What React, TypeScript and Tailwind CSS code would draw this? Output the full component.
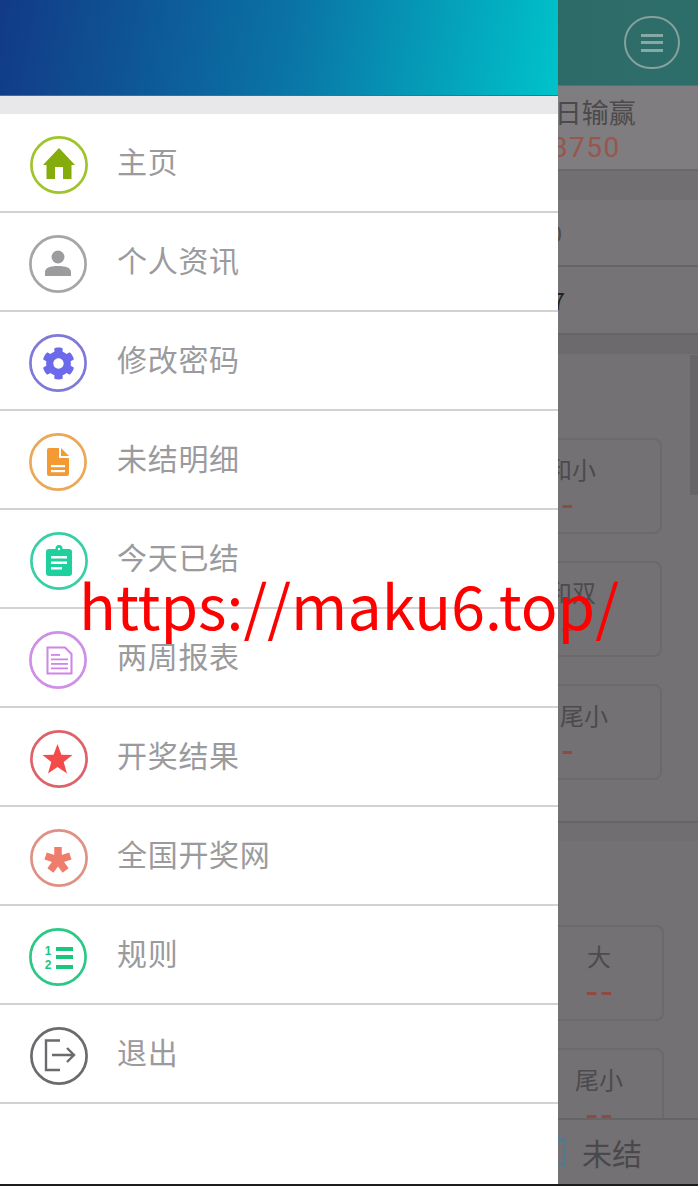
import React from "react";
import { FaCog } from "react-icons/fa";

const cjk = "font-['Noto_Sans_CJK_SC','Noto_Sans',sans-serif]";

function Ring({ color, children }: { color: string; children: React.ReactNode }) {
  return (
    <svg width="58" height="58" viewBox="0 0 58 58" className="shrink-0 block">
      <circle cx="29" cy="29" r="27.6" fill="none" stroke={color} strokeWidth="2.7" />
      {children}
    </svg>
  );
}

const HomeIcon = () => (
  <Ring color="#a0c42c">
    <path d="M29 12 L45 29 H41.5 V43 H33 V31 H25 V43 H16.5 V29 H13 Z" fill="#84ad0c" />
  </Ring>
);
const UserIcon = () => (
  <Ring color="#a6a5a8">
    <circle cx="29" cy="22" r="6.5" fill="#9c9b9e" />
    <path d="M16 41 V37 C16 33 21 31 29 31 C37 31 42 33 42 37 V41 Z" fill="#9c9b9e" />
  </Ring>
);
const GearIcon = () => (
  <Ring color="#7f79da">
    <foreignObject x="12.5" y="12.5" width="33" height="33">
      <div className="w-[33px] h-[33px] text-[#6c69ea]">
        <FaCog size={33} />
      </div>
    </foreignObject>
  </Ring>
);
const DocIcon = () => (
  <Ring color="#eaa858">
    <path d="M18 17 Q18 15 20 15 H30 V25 H40 V41 Q40 43 38 43 H20 Q18 43 18 41 Z" fill="#f39a34" />
    <path d="M32 15 L40 23 H32 Z" fill="#f39a34" />
    <rect x="22" y="32" width="14" height="2.2" fill="#fff" />
    <rect x="22" y="37" width="14" height="2.2" fill="#fff" />
  </Ring>
);
const ClipIcon = () => (
  <Ring color="#38cfa6">
    <rect x="16" y="17" width="26" height="27" rx="3" fill="#1ed09e" />
    <circle cx="29" cy="16.5" r="3.5" fill="#1ed09e" />
    <circle cx="29" cy="17" r="1.2" fill="#fff" />
    <rect x="21" y="24" width="16" height="2.5" fill="#fff" />
    <rect x="21" y="29.5" width="16" height="2.5" fill="#fff" />
    <rect x="21" y="35" width="11" height="2.5" fill="#fff" />
  </Ring>
);
const ReportIcon = () => (
  <Ring color="#cf8fe6">
    <path d="M18.5 16.5 H36 L42.5 23 V42.5 H18.5 Z" fill="none" stroke="#d283ea" strokeWidth="2" />
    <rect x="22" y="23" width="9" height="1.8" fill="#d283ea" />
    <rect x="22" y="27.5" width="17" height="1.8" fill="#d283ea" />
    <rect x="22" y="32" width="17" height="1.8" fill="#d283ea" />
    <rect x="22" y="36.5" width="17" height="1.8" fill="#d283ea" />
  </Ring>
);
const StarIcon = () => (
  <Ring color="#dc636a">
    <polygon
      points="27.5,14 31.4,24.8 42.5,25 33.7,32 37,43.5 27.5,37 18,43.5 21.3,32 12.5,25 23.6,24.8"
      fill="#f54a4a"
    />
  </Ring>
);
const AsteriskIcon = () => (
  <Ring color="#df9184">
    <g stroke="#ee7d6b" strokeWidth="7.5">
      <path d="M28 31 L28 18" />
      <path d="M28 31 L40.4 27" />
      <path d="M28 31 L35.6 41.5" />
      <path d="M28 31 L20.4 41.5" />
      <path d="M28 31 L15.6 27" />
    </g>
  </Ring>
);
const ListIcon = () => (
  <Ring color="#2cc886">
    <rect x="27" y="19" width="17" height="4" fill="#1bc77d" />
    <rect x="27" y="27" width="17" height="4" fill="#1bc77d" />
    <rect x="27" y="37" width="17" height="4" fill="#1bc77d" />
    <text x="19" y="27" textAnchor="middle" fontSize="12" fontWeight="700" fill="#1bc77d" fontFamily="Liberation Sans, sans-serif">1</text>
    <text x="19" y="41" textAnchor="middle" fontSize="12" fontWeight="700" fill="#1bc77d" fontFamily="Liberation Sans, sans-serif">2</text>
  </Ring>
);
const LogoutIcon = () => (
  <Ring color="#6c6a6e">
    <path d="M30 13.5 H16 V43 H30" fill="none" stroke="#6c6a6e" strokeWidth="2.4" />
    <path d="M22 28 H44 M37 21 L44 28 L37 35" fill="none" stroke="#6c6a6e" strokeWidth="2.4" />
  </Ring>
);

const menu: { label: string; icon: React.ReactNode; nudge?: boolean }[] = [
  { label: "主页", icon: <HomeIcon />, nudge: true },
  { label: "个人资讯", icon: <UserIcon /> },
  { label: "修改密码", icon: <GearIcon /> },
  { label: "未结明细", icon: <DocIcon /> },
  { label: "今天已结", icon: <ClipIcon />, nudge: true },
  { label: "两周报表", icon: <ReportIcon /> },
  { label: "开奖结果", icon: <StarIcon />, nudge: true },
  { label: "全国开奖网", icon: <AsteriskIcon />, nudge: true },
  { label: "规则", icon: <ListIcon /> },
  { label: "退出", icon: <LogoutIcon />, nudge: true },
];

function Card({ label }: { label?: string }) {
  return (
    <div className="h-[96px] rounded-lg border-2 border-[#6b696b] flex flex-col items-center pt-[12px]">
      {label && (
        <>
          <span className="text-[24px] leading-[34px] text-[#4c4a4c]">{label}</span>
          <span className="text-[36px] leading-[24px] mt-[3px] ml-[2px] tracking-[2px] font-medium text-[#8f4a42]">--</span>
        </>
      )}
    </div>
  );
}

export default function App() {
  return (
    <div className={`relative w-[698px] h-[1186px] overflow-hidden bg-[#1d1c1d] ${cjk}`}>
      {/* Page dimmed behind the drawer */}
      <div className="h-[1184px] flex flex-col bg-[#737173]">
        <header className="h-[86px] shrink-0 bg-gradient-to-r from-[#2e5f66] to-[#2d6e6a] flex items-center justify-end pr-[18px] border-b border-[#5d6f6d]">
          <div className="w-[56px] h-[53px] rounded-full border-2 border-[#86a09e] flex flex-col items-center justify-center gap-[4.5px]">
            <span className="w-[22px] h-[3px] bg-[#88a8a4]" />
            <span className="w-[22px] h-[3px] bg-[#88a8a4]" />
            <span className="w-[22px] h-[3px] bg-[#88a8a4]" />
          </div>
        </header>

        <section className="h-[85px] shrink-0 bg-[#7f7d7f] border-b-2 border-[#6a686a] grid grid-cols-3">
          <div />
          <div />
          <div className="flex flex-col items-center pt-[7px]">
            <span className="text-[27px] leading-[38px] text-[#4c4a4c]">今日输赢</span>
            <span className="text-[28px] leading-[34px] text-[#98564c] font-['Roboto',sans-serif] tracking-[1.5px]">-8750</span>
          </div>
        </section>

        <div className="h-[29px] shrink-0 bg-[#716f71]" />
        <div className="h-[67px] shrink-0 bg-[#777577] border-b-2 border-[#666466] flex items-center justify-end pr-[136px] text-[22px] text-[#4c4a4c]">
          0
        </div>
        <div className="h-[68px] shrink-0 bg-[#757375] border-b-2 border-[#666466] flex items-center justify-end pr-[133px] text-[24px] text-[#222]">
          7
        </div>
        <div className="h-[19px] shrink-0 bg-[#6c6a6c]" />

        <section className="h-[469px] shrink-0 border-b-2 border-[#666466] pt-[84px] pl-[2px] pr-[36px] grid grid-cols-3 gap-x-[24px] gap-y-[27px] content-start">
          <Card />
          <Card />
          <Card label="总和小" />
          <Card />
          <Card />
          <Card label="总和双" />
          <Card />
          <Card />
          <Card label="总和尾小" />
        </section>
        <div className="h-[18px] shrink-0 bg-[#706e70]" />

        <section className="flex-1 min-h-0 overflow-hidden pt-[84px] pl-[72px] pr-[34px] grid grid-cols-4 gap-x-[24px] gap-y-[27px] content-start">
          <Card />
          <Card />
          <Card />
          <Card label="大" />
          <Card />
          <Card />
          <Card />
          <Card label="尾小" />
        </section>

        <footer className="h-[66px] shrink-0 bg-[#737173] border-t-2 border-[#666466] flex items-center justify-end gap-[16px] pr-[56px]">
          <div className="w-[22px] h-[28px] rounded-[4px] border-[3px] border-[#4f7a90]" />
          <span className="text-[30px] leading-none text-[#4a484a]">未结</span>
        </footer>
      </div>

      {/* Scroll indicator */}
      <div className="absolute right-0 top-[355px] w-[8px] h-[140px] bg-[#676567]" />

      {/* Drawer */}
      <aside className="absolute left-0 top-0 w-[558px] h-[1184px] bg-white flex flex-col">
        <div className="h-[96px] shrink-0 bg-[linear-gradient(100deg,#123a86_0%,#0a74a6_52%,#00c3ca_100%)] border-b border-[#1b8098]" />
        <div className="h-[18px] shrink-0 bg-[#e8e8ea]" />
        {menu.map((m) => (
          <div key={m.label} className="h-[99px] shrink-0 border-b-2 border-[#d2d1d3] flex items-center pl-[29px]">
            <div className={m.nudge ? "mt-[5px] ml-[1px] mr-[-1px]" : "mt-[5px]"}>{m.icon}</div>
            <span className="ml-[30px] -mt-[6px] text-[30px] leading-none tracking-[0.7px] text-[#9b9a9d]">{m.label}</span>
          </div>
        ))}
      </aside>

      {/* Watermark */}
      <div className="absolute left-[79px] top-[560px] text-[60.8px] leading-[88px] whitespace-nowrap text-[#ff0000]">
        https://maku6.top/
      </div>
    </div>
  );
}
